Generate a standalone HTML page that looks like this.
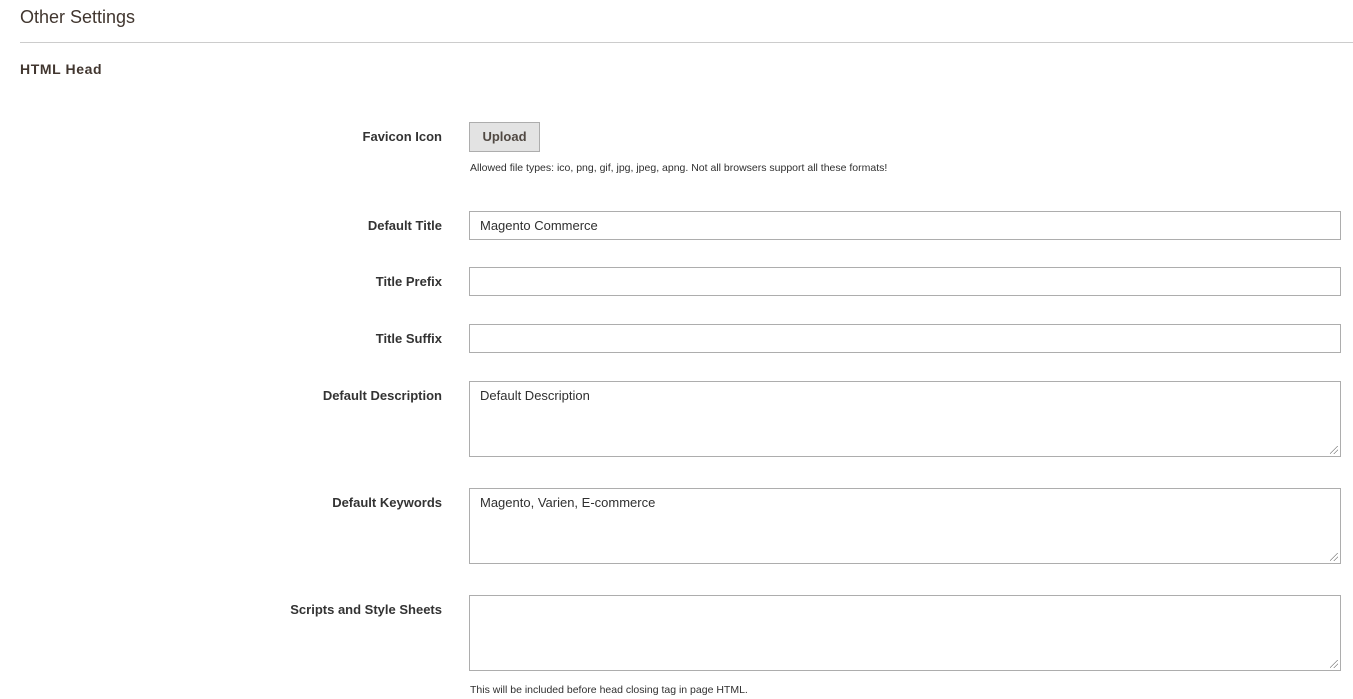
<!DOCTYPE html>
<html><head><style>
body{margin:0;width:1353px;height:699px;overflow:hidden;background:#fff;font-family:"Liberation Sans",sans-serif;color:#303030;position:relative}
.a{position:absolute}
.lbl{position:absolute;right:911px;font-size:13px;font-weight:bold;color:#333;text-align:right;white-space:nowrap}
.in{position:absolute;left:469px;width:872px;border:1px solid #adadad;background:#fff;box-sizing:border-box;font-size:13px;padding-left:10px;color:#303030}
.rs{position:absolute;right:2px;bottom:2px;width:8px;height:8px;background:linear-gradient(135deg,transparent 45%,#888 45%,#888 52%,transparent 52%,transparent 70%,#888 70%,#888 77%,transparent 77%)}
.note{position:absolute;left:470px;font-size:10.5px;color:#303030}
</style></head><body>
<div class="a" style="left:20px;top:7px;font-size:18px;color:#41362f">Other Settings</div>
<div class="a" style="left:20px;top:42px;width:1333px;height:1px;background:#ccc"></div>
<div class="a" style="left:20px;top:61px;font-size:14px;font-weight:bold;letter-spacing:.6px;color:#41362f">HTML Head</div>

<div class="lbl" style="top:129px">Favicon Icon</div>
<div class="a" style="left:469px;top:122px;width:71px;height:30px;box-sizing:border-box;background:#e3e3e3;border:1px solid #adadad;font-size:13px;font-weight:bold;color:#514943;text-align:center;line-height:28px">Upload</div>
<div class="note" style="top:162px">Allowed file types: ico, png, gif, jpg, jpeg, apng. Not all browsers support all these formats!</div>

<div class="lbl" style="top:218px">Default Title</div>
<div class="in" style="top:211px;height:29px;line-height:27px">Magento Commerce</div>
<div class="lbl" style="top:274px">Title Prefix</div>
<div class="in" style="top:267px;height:29px"></div>
<div class="lbl" style="top:331px">Title Suffix</div>
<div class="in" style="top:324px;height:29px"></div>
<div class="lbl" style="top:388px">Default Description</div>
<div class="in" style="top:381px;height:76px;padding-top:6px">Default Description<div class="rs"></div></div>
<div class="lbl" style="top:495px">Default Keywords</div>
<div class="in" style="top:488px;height:76px;padding-top:6px">Magento, Varien, E-commerce<div class="rs"></div></div>
<div class="lbl" style="top:602px">Scripts and Style Sheets</div>
<div class="in" style="top:595px;height:76px"><div class="rs"></div></div>
<div class="note" style="top:684px">This will be included before head closing tag in page HTML.</div>
</body></html>
